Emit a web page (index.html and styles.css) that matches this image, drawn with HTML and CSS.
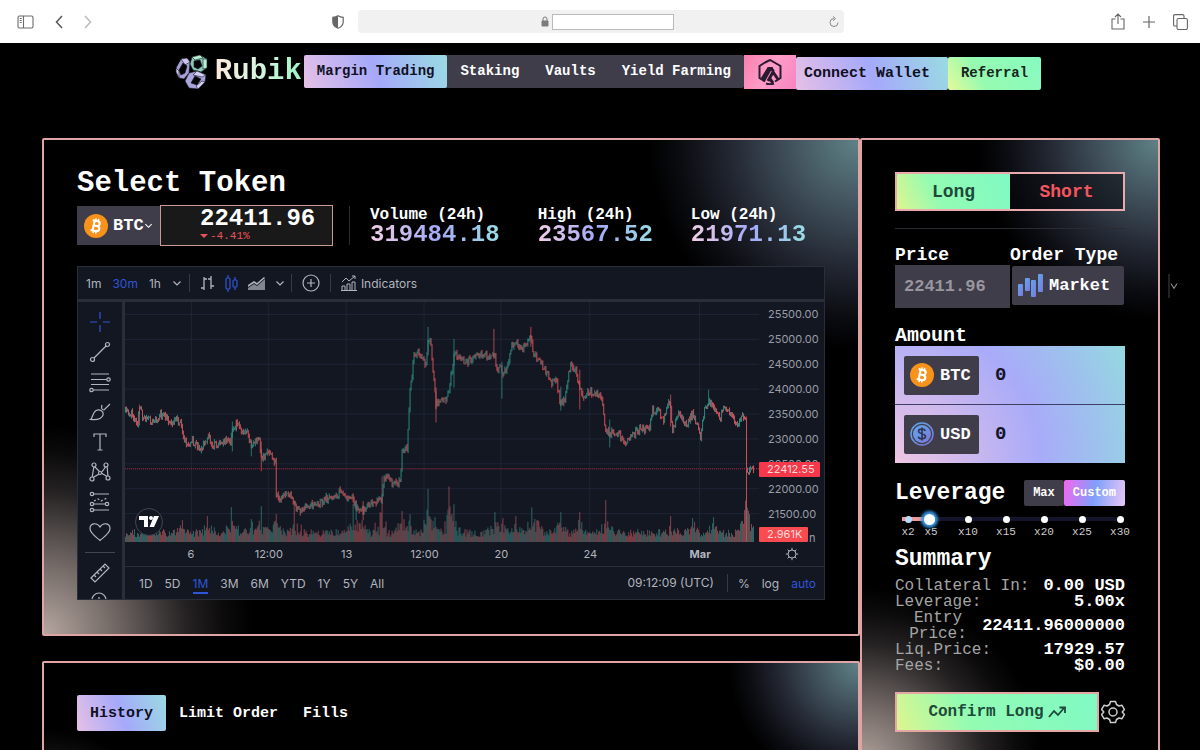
FILE: index.html
```html
<!DOCTYPE html>
<html lang="en">
  <head>
    <meta charset="UTF-8" />
    <meta name="viewport" content="width=device-width, initial-scale=1.0" />
    <title>Rubik - Margin Trading</title>
    <link rel="stylesheet" href="styles.css" />
  </head>
  <body>
    <svg class="defs" width="0" height="0" aria-hidden="true">
      <defs>
        <linearGradient id="blue" x1="0" y1="0" x2="1" y2="1">
          <stop offset="0" stop-color="#5fa8ea" />
          <stop offset="1" stop-color="#7c78dc" />
        </linearGradient>
        <symbol id="btc" viewBox="0 0 24 24">
          <circle cx="12" cy="12" r="12" fill="#f7931a" />
          <g fill="none" stroke="#fff" stroke-width="2.2" transform="rotate(12 12 12)">
            <path d="M9.6 6.5v11M7.6 7h5.2c3.2 0 3.2 4.8 0 4.8H9.6M12.8 11.8c4 0 4 5.2 0 5.2H7.6" />
            <path d="M10.6 4.5V7M13.2 4.5V7M10.6 17v2.5M13.2 17v2.5" stroke-width="1.5" />
          </g>
        </symbol>
        <symbol id="chevron" viewBox="0 0 10 10">
          <path d="M1.5 3.5 5 7l3.5-3.5" fill="none" stroke="currentColor" stroke-width="1.2" />
        </symbol>
      </defs>
    </svg>

    <div class="browser">
      <div class="browser-left">
        <svg width="17" height="14" viewBox="0 0 17 14" fill="none" stroke="#6c6c6c" stroke-width="1.1"><rect x="1" y="1" width="15" height="12" rx="1.5" /><path d="M6.5 1v12M2.7 3.5h2M2.7 5.5h2M2.7 7.5h2" /></svg>
        <svg width="8" height="14" viewBox="0 0 8 14" fill="none" stroke="#555" stroke-width="1.5"><path d="M7 1 1.5 7 7 13" /></svg>
        <svg width="8" height="14" viewBox="0 0 8 14" fill="none" stroke="#bbb" stroke-width="1.5"><path d="m1 1 5.500 6L1 13" /></svg>
      </div>
      <div class="browser-center">
        <svg width="12" height="14" viewBox="0 0 12 14"><path d="M6 .8c1.600 1 3.200 1.500 5.200 1.600V7c0 3-2 5-5.200 6.300C2.800 12 .8 10 .8 7V2.400C2.800 2.300 4.400 1.800 6 .8z" fill="none" stroke="#666" stroke-width="1.2" /><path d="M6 1v12C3 12 1 10 1 7V2.500C3 2.400 4.500 2 6 1z" fill="#666" /></svg>
        <div class="address">
          <svg width="8" height="11" viewBox="0 0 8 11"><rect x="0.500" y="4.500" width="7" height="6" rx="1" fill="#7b7b7b" /><path d="M2 5V3a2 2 0 0 1 4 0v2" fill="none" stroke="#7b7b7b" /></svg>
          <input class="url" type="text" aria-label="Address" />
          <svg class="reload" width="10" height="12" viewBox="0 0 10 12" fill="none" stroke="#888"><path d="M9 6.500A4 4 0 1 1 5 2.500M4 .5l2.500 2L4 4.800" /></svg>
        </div>
      </div>
      <div class="browser-right">
        <svg width="14" height="17" viewBox="0 0 14 17" fill="none" stroke="#666" stroke-width="1.100"><path d="M4.500 6H1v10h12V6H9.500M7 11V1M4 4l3-3 3 3" /></svg>
        <svg width="12" height="12" viewBox="0 0 12 12" stroke="#666" stroke-width="1.200"><path d="M6 0v12M0 6h12" /></svg>
        <svg width="15" height="16" viewBox="0 0 15 16" fill="none" stroke="#666" stroke-width="1.100"><rect x="4" y="4.500" width="10.400" height="11" rx="1.500" /><path d="M4 12H1.500Q.6 12 .6 11V2Q.6.6 2 .6h7.500q1.500 0 1.500 1.400v2.500" /></svg>
      </div>
    </div>

    <header class="header">
      <a class="logo" href="#">
        <svg width="34" height="36" viewBox="0 0 34 36" stroke-linejoin="round" stroke="#15151f" stroke-width="0.600">
          <path d="m1 14 5-9 6-1 3 4-1 11-5 6-5-1-3-6z" fill="#a79fd8" />
          <path d="m1 14 3 3v7l-3-6zM12 4l3 4-5 3-4-6z" fill="#c9c6ee" />
          <path d="m8 9 4 3-2 7-4 2-2-5z" fill="#050508" />
          <path d="m17 3 8-2 7 4v9l-6 4-8-2-3-6z" fill="#8cc9b8" />
          <path d="m17 3 8-2 3 3-8 2zM28 5l4 0v9l-4 1z" fill="#b9f0d4" />
          <path d="m19 7 6-1 2 6-4 3-4-2z" fill="#050508" />
          <path d="m14 19 8-2 9 4-1 7-7 7-9-1-4-7z" fill="#a9a4dc" />
          <path d="m22 17 9 4-4 2-9-2zM23 35l7-7-3-1-6 5z" fill="#d0cdf2" />
          <path d="m20 22 6 3-4 6-6-2z" fill="#050508" />
        </svg>
        <span>Rubik</span>
      </a>
      <nav class="nav">
        <a class="active" href="#">Margin Trading</a>
        <a href="#">Staking</a>
        <a href="#">Vaults</a>
        <a href="#">Yield Farming</a>
      </nav>
      <button class="network" aria-label="Network">
        <svg width="26" height="26" viewBox="0 0 26 26" fill="none" stroke="#2b1a33" stroke-width="2"><path d="M8 3.500 13 1l10.500 6v12L18 22.500M8 22.500 2.500 19V7L8 3.500M9 24.500q4 1.500 8 0" /><path d="M5 20 11.500 9.500h2L6.500 22M11 22l5-9 5.500 8M14.500 9.500l2 3M13 20l3 4" stroke-width="3" /></svg>
      </button>
      <button class="connect">Connect Wallet</button>
      <a class="referral" href="#">Referral</a>
    </header>

    <main class="main">
      <div class="left">
        <section class="panel market">
          <h1>Select Token</h1>
          <div class="token-row">
            <button class="token"><svg width="24" height="24"><use href="#btc" /></svg>BTC<svg class="chev" width="9" height="9"><use href="#chevron" /></svg></button>
            <div class="price-box">
              <strong>22411.96</strong>
              <span><i class="down"></i>-4.41%</span>
            </div>
            <div class="stats">
              <div class="stat"><span>Volume (24h)</span><b>319484.18</b></div>
              <div class="stat"><span>High (24h)</span><b>23567.52</b></div>
              <div class="stat"><span>Low (24h)</span><b>21971.13</b></div>
            </div>
          </div>

          <div class="chart">
            <div class="toolbar">
              <div class="group intervals">
                <button>1m</button>
                <button class="on">30m</button>
                <button>1h</button>
                <button aria-label="More intervals"><svg width="10" height="10"><use href="#chevron" /></svg></button>
              </div>
              <div class="group types">
                <button aria-label="Bars"><svg width="15" height="16" viewBox="0 0 15 16" fill="none" stroke="currentColor" stroke-width="1.300"><path d="M4 2v13M1 13h3M4 4h3M11 1v13M8 4h3M11 11h3" /></svg></button>
                <button class="on" aria-label="Candles"><svg width="13" height="17" viewBox="0 0 13 17" fill="none" stroke="currentColor" stroke-width="1.200"><path d="M3 0v3M3 14v3M10 2v3M10 12v3" /><rect x="1" y="3" width="4" height="11" rx="1" /><rect x="8" y="5" width="4" height="7" rx="1" /></svg></button>
                <button aria-label="Area"><svg width="17" height="14" viewBox="0 0 17 14" fill="currentColor"><path d="m0 9 6-4 3 2 7-6 1 1-8 7-3-2-6 4z" /><path d="M0 14v-2l6-4 3 2 8-7v11z" opacity="0.700" /></svg></button>
                <button aria-label="More chart types"><svg width="10" height="10"><use href="#chevron" /></svg></button>
              </div>
              <div class="group">
                <button aria-label="Compare"><svg width="18" height="18" viewBox="0 0 18 18" fill="none" stroke="currentColor" stroke-width="1.200"><circle cx="9" cy="9" r="8" /><path d="M9 5v8M5 9h8" /></svg></button>
              </div>
              <div class="group">
                <button class="indicators"><svg width="16" height="16" viewBox="0 0 16 16" fill="none" stroke="currentColor"><path d="m1 7 4-4 3 3 6-5M11 1h3v3M1 15.500V11h3v4.500M6 15.500V9h3v6.500M11 15.500V7h3v8.500M0 15.500h16" /></svg>Indicators</button>
              </div>
            </div>

            <div class="chart-body">
              <div class="tools">
                <button class="on" aria-label="Crosshair"><svg viewBox="0 0 22 22"><path d="M11 1v7M11 14v7M1 11h7M14 11h7" /></svg></button>
                <button aria-label="Trend line"><svg viewBox="0 0 22 22"><circle cx="3.500" cy="18.500" r="2" /><circle cx="18.500" cy="3.500" r="2" /><path d="m5 17 12-12" /></svg></button>
                <button aria-label="Fib retracement"><svg viewBox="0 0 22 22"><path d="M2 3h18M2 8.500h16M2 13.500h18M4 19h16" /><circle cx="19.500" cy="8.500" r="1.700" fill="#131722" /><circle cx="2.500" cy="19" r="1.700" fill="#131722" /></svg></button>
                <button aria-label="Brush"><svg viewBox="0 0 22 22"><path d="M1.500 18.500C4 17 3 12 7 9.500c4-2 8 1 7 4.500-1.500 4.500-8 5-12.500 4.500zM13 4c-1 3 0 5 2 5l6-6" /></svg></button>
                <button aria-label="Text"><svg viewBox="0 0 22 22"><path d="M5 6V3h12v3M11 3v16M8.500 19h5" /></svg></button>
                <button aria-label="Pattern"><svg viewBox="0 0 22 22"><path d="m3 17 2-12 7 7 6-8 1 12-7-4z" /><g fill="#131722"><circle cx="3" cy="18" r="2" /><circle cx="5" cy="4" r="2" /><circle cx="17" cy="4" r="2" /><circle cx="19" cy="17" r="2" /><circle cx="11" cy="12" r="1.500" /></g></svg></button>
                <button aria-label="Forecast"><svg viewBox="0 0 22 22"><path d="M3 3h17M3 13h17M3 19h17" /><path d="m5 10 4-2 3 2 6-3" stroke-dasharray="2 2" /><g fill="#131722"><circle cx="3" cy="3" r="1.700" /><circle cx="3" cy="13" r="1.700" /><circle cx="18" cy="13" r="1.700" /><circle cx="3" cy="19" r="1.700" /></g></svg></button>
                <button aria-label="Icons"><svg viewBox="0 0 22 22"><path d="M11 19.500C7 16 1 12 1 7.500 1 2 8 1 11 6c3-5 10-4 10 1.500C21 12 15 16 11 19.500z" /></svg></button>
                <hr />
                <button aria-label="Measure"><svg viewBox="0 0 22 22"><path d="M2 16 16 2l4 4L6 20zM5 13l2 2M8 10l2 2M11 7l2 2M14 4l2 2" /></svg></button>
                <button aria-label="Zoom"><svg viewBox="0 0 22 22"><circle cx="10" cy="8" r="7" /><path d="M7 8h6M10 5v6M15 13l5 5" /></svg></button>
              </div>

              <div class="chart-main">
                <div class="plot-row">
                  <div class="plot">
                    <svg id="plot" viewBox="0 0 635 241" preserveAspectRatio="none" role="img" aria-label="BTC price, 30 minutes"></svg>
                    <div class="tv-badge"><svg width="20" height="12" viewBox="0 0 20 12" fill="#fff"><path d="M0 0h9v11H5V4H0zM15 0h5l-5 11h-4.500z" /><circle cx="12" cy="2" r="2" /></svg></div>
                  </div>
                  <div class="prices">
                    <span>25500.00</span><span>25000.00</span><span>24500.00</span><span>24000.00</span><span>23500.00</span><span>23000.00</span><span>22500.00</span><span>22000.00</span><span>21500.00</span>
                    <div class="tag last">22412.55</div>
                    <div class="tag vol">2.961K</div>
                    <div class="vol-unit">n</div>
                  </div>
                </div>
                <div class="time-row">
                  <div class="times"><span>6</span><span>12:00</span><span>13</span><span>12:00</span><span>20</span><span>24</span><b>Mar</b></div>
                  <button class="axis-settings" aria-label="Axis settings"><svg width="14" height="14" viewBox="0 0 14 14" fill="none" stroke="currentColor"><circle cx="7" cy="7" r="4" /><path d="M7 3V.8M7 11v2.200M3 7H.8M11 7h2.200M4.200 4.200 2.600 2.600M9.800 9.800l1.600 1.600M4.200 9.800l-1.600 1.600M9.800 4.200l1.600-1.600" /></svg></button>
                </div>
                <div class="ranges">
                  <button>1D</button><button>5D</button><button class="on">1M</button><button>3M</button><button>6M</button><button>YTD</button><button>1Y</button><button>5Y</button><button>All</button>
                  <span class="clock">09:12:09 (UTC)</span>
                  <button>%</button><button>log</button><button class="on-text">auto</button>
                </div>
              </div>
            </div>
          </div>
        </section>

        <section class="panel orders">
          <div class="order-tabs">
            <button class="active">History</button>
            <button>Limit Order</button>
            <button>Fills</button>
          </div>
        </section>
      </div>

      <aside class="panel trade">
        <div class="sides">
          <button class="long">Long</button>
          <button class="short">Short</button>
        </div>
        <hr />
        <div class="order-fields">
          <div>
            <label for="price">Price</label>
            <input id="price" type="text" value="22411.96" />
          </div>
          <div>
            <label for="orderType">Order Type</label>
            <div class="select">
              <svg width="25" height="23" viewBox="0 0 25 23" fill="url(#blue)"><rect y="10" width="5" height="12" rx="1" /><rect x="7" y="4" width="5" height="13" rx="1" /><rect x="13" y="6" width="5" height="17" rx="1" /><rect x="20" width="5" height="18" rx="1" /></svg>
              <select id="orderType"><option>Market</option></select>
            </div>
          </div>
          <svg class="order-chev" width="12" height="24" viewBox="0 0 12 24" fill="none" stroke="#aaa"><path d="M1 0v24" stroke="#444" /><path d="m3 9.500 3 5 3-5" /></svg>
        </div>

        <h3>Amount</h3>
        <div class="amounts">
          <div class="amount">
            <label for="btcAmount"><svg width="24" height="24"><use href="#btc" /></svg>BTC</label>
            <input id="btcAmount" type="text" value="0" />
          </div>
          <div class="amount">
            <label for="usdAmount"><svg width="24" height="24" viewBox="0 0 24 24"><circle cx="12" cy="12" r="11" fill="none" stroke="url(#blue)" stroke-width="1.500" /><circle cx="12" cy="12" r="9" fill="url(#blue)" /><path d="M15.500 9c-1-2.500-7-2.500-7 .3 0 3 7 2 7 5.200 0 3-6.500 3-7.300.3M12 5.500v13" fill="none" stroke="#2f3552" stroke-width="1.600" /></svg>USD</label>
            <input id="usdAmount" type="text" value="0" />
          </div>
        </div>

        <div class="leverage-head">
          <h2>Leverage</h2>
          <div class="modes"><button>Max</button><button class="custom">Custom</button></div>
        </div>
        <div class="leverage">
          <input type="range" min="2" max="30" value="5" aria-label="Leverage" />
          <div class="marks">
            <span>x2</span><span>x5</span><span>x10</span><span>x15</span><span>x20</span><span>x25</span><span>x30</span>
          </div>
        </div>

        <h2 class="summary-title">Summary</h2>
        <dl class="summary">
          <div><dt>Collateral In:</dt><dd>0.00 USD</dd></div>
          <div><dt>Leverage:</dt><dd>5.00x</dd></div>
          <div><dt class="wrap">Entry Price:</dt><dd>22411.96000000</dd></div>
          <div><dt>Liq.Price:</dt><dd>17929.57</dd></div>
          <div><dt>Fees:</dt><dd>$0.00</dd></div>
        </dl>

        <div class="confirm-row">
          <button class="confirm">Confirm Long<svg width="18" height="12" viewBox="0 0 18 12" fill="none" stroke="currentColor" stroke-width="1.800"><path d="m1 11 5-6 4 4 6-7M11.500 1.500H17V7" /></svg></button>
          <button class="settings" aria-label="Settings"><svg width="24" height="24" viewBox="0 0 24 24" fill="none" stroke="#ccc" stroke-width="1.500" stroke-linejoin="round"><circle cx="12" cy="12" r="4" /><path d="M9.500 1.500h5l1 3 2.500 1.500 3-.7 2.400 4.200-2.200 2.500 2.200 2.500-2.400 4.200-3-.7-2.500 1.500-1 3h-5l-1-3L6 18l-3 .7L.6 14.500 2.800 12 .6 9.500 3 5.300 6 6l2.500-1.500z" /></svg></button>
        </div>
      </aside>
    </main>
    <script src="script.js"></script>
  </body>
</html>
```
FILE: styles.css
```css
* {
  box-sizing: border-box;
}

body {
  margin: 0;
  background: #000;
  color: #fff;
  font-family: "Liberation Mono", monospace;
  font-weight: bold;
  overflow-x: hidden;
}

button,
input,
select {
  font: inherit;
  color: inherit;
  margin: 0;
  padding: 0;
  border: none;
  background: none;
}

button {
  cursor: pointer;
  white-space: nowrap;
}

a {
  color: inherit;
  text-decoration: none;
}

svg {
  flex: none;
  display: block;
}

h1,
h2,
h3,
dl,
dd {
  margin: 0;
}

.defs {
  position: absolute;
}

/* Browser bar */
.browser {
  display: grid;
  grid-template-columns: 315fr 512px 344fr;
  align-items: center;
  height: 43px;
  padding: 0 12px 0 17px;
  background: #fff;
}

.browser-left,
.browser-right,
.browser-center,
.address {
  display: flex;
  align-items: center;
}

.browser-left {
  gap: 21px;
}

.browser-right {
  gap: 18px;
  justify-content: flex-end;
}

.browser-center {
  gap: 14px;
}

.address {
  flex: 1;
  gap: 3px;
  height: 23px;
  padding: 0 5px 0 183px;
  border-radius: 4px;
  background: #f1f1f1;
}

.url {
  width: 122px;
  height: 16px;
  border: 1px solid #bbb;
  background: #fff;
  color: #333;
}

.reload {
  margin-left: auto;
}

/* Site header */
.header {
  display: flex;
  justify-content: center;
  align-items: flex-start;
  height: 95px;
  padding: 12px 0 0 16px;
  font-size: 14px;
}

.logo {
  display: flex;
  align-items: center;
  gap: 6px;
  height: 33px;
  margin-right: 2px;
}

.logo span {
  font-size: 29px;
  background: linear-gradient(100deg, #ffe8dd, #d8f5e0 50%, #98f5c4);
  background-clip: text;
  color: transparent;
}

.nav {
  display: flex;
  background: #403d4b;
  border-radius: 2px;
}

.nav a,
.referral {
  padding: 0 13px;
  line-height: 33px;
}

.nav .active,
.connect,
.order-tabs .active {
  background: linear-gradient(70deg, #e6c0e6, #a5a9fa 50%, #9adbe3);
  color: #10101f;
  border-radius: 2px;
}

.network {
  display: grid;
  place-items: center;
  width: 52px;
  height: 34px;
  background: linear-gradient(120deg, #f87fae, #ff9dc8 50%, #f783c0);
}

.connect {
  height: 33px;
  margin-top: 2px;
  padding: 0 18px 0 8px;
  font-size: 15px;
}

.referral {
  margin-top: 2px;
  background: linear-gradient(60deg, #e6fa9a, #96fbb0 35%, #88fac0);
  color: #17251f;
  border-radius: 2px;
}

/* Panels */
.main {
  display: grid;
  grid-template-columns: minmax(0, 1fr) 300px;
  align-items: start;
  padding: 0 40px 0 42px;
}

.left {
  display: flex;
  flex-direction: column;
  gap: 25px;
}

.panel {
  --glow: 210px;
  border: 2px solid #dfa5a5;
  border-radius: 2px;
  padding: 32px 33px 34px;
  background:
    radial-gradient(circle var(--glow) at 100% 0, #5f8286 0, #435560 30%, #222631 62%, #0b0c11 85%, transparent),
    radial-gradient(circle var(--glow) at 0 100%, #b5a69f 0, #6f6663 35%, #252223 68%, #0c0b0b 86%, transparent),
    #000;
}

h1 {
  font-size: 29px;
  line-height: 24px;
}

h2 {
  font-size: 23px;
  line-height: 26px;
}

h3 {
  font-size: 20px;
  line-height: 20px;
}

.token-row {
  display: flex;
  align-items: center;
  margin: 9px 0 20px;
}

.token {
  display: flex;
  align-items: center;
  gap: 5px;
  width: 83px;
  height: 39px;
  padding-left: 7px;
  background: #403d4b;
  font-size: 17px;
}

.token .chev {
  margin-left: -5px;
}

.price-box {
  display: flex;
  flex-direction: column;
  width: 173px;
  height: 41px;
  padding: 1px 0 0 39px;
  border: 1px solid #c99a95;
  background: #191919;
}

.price-box strong {
  font-size: 24px;
  line-height: 24px;
}

.price-box span {
  display: flex;
  align-items: center;
  gap: 2px;
  font-size: 11px;
  line-height: 10px;
  font-weight: normal;
  color: #e8525c;
}

.down {
  border: 4px solid transparent;
  border-top-color: #e8525c;
  border-bottom: none;
}

.stats {
  display: flex;
  gap: 38px;
  margin-left: 16px;
  padding-left: 20px;
  border-left: 1px solid #2c2c2c;
}

.stat {
  display: flex;
  flex-direction: column;
}

.stat span {
  font-size: 16px;
  line-height: 18px;
}

.stat b {
  font-size: 24px;
  line-height: 21px;
  background: linear-gradient(90deg, #f0cfe4, #a5a9f8 50%, #98dce4);
  background-clip: text;
  color: transparent;
}

/* Chart widget */
.chart {
  font-family: Inter, sans-serif;
  font-weight: normal;
  font-size: 12px;
  color: #b2b5be;
  background: #131722;
  border: 1px solid #2a2e39;
}

.chart button {
  display: flex;
  align-items: center;
}

.chart .on,
.chart .on-text {
  color: #2f55d8;
}

.toolbar {
  display: flex;
  align-items: center;
  height: 35px;
  border-bottom: 3px solid #2a2e39;
}

.group {
  display: flex;
  align-items: center;
  height: 18px;
  padding: 0 10px;
  border-right: 1px solid #363a45;
}

.group:last-child {
  border: none;
}

.intervals {
  gap: 11px;
  padding: 0 7px 0 8px;
}

.types {
  gap: 10px;
  padding: 0 6px 0 10px;
}

.indicators {
  gap: 4px;
}

.chart-body {
  display: flex;
  height: 297px;
}

.tools {
  display: flex;
  flex-direction: column;
  align-items: center;
  gap: 8px;
  width: 47px;
  padding-top: 9px;
  border-right: 3px solid #2a2e39;
  overflow: hidden;
}

.tools svg {
  width: 22px;
  height: 22px;
  fill: none;
  stroke: currentColor;
  stroke-width: 1.2px;
}

.tools hr {
  flex: none;
  width: 30px;
  margin: 1px 0;
  border: none;
  border-top: 1px solid #434651;
}

.chart-main {
  display: flex;
  flex-direction: column;
  flex: 1;
  min-width: 0;
}

.plot-row {
  display: flex;
  flex: 1;
  min-height: 0;
}

.plot {
  position: relative;
  flex: 1;
  min-width: 0;
}

.plot > svg {
  width: 100%;
  height: 100%;
}

.tv-badge {
  position: absolute;
  left: 10px;
  bottom: 6px;
  display: grid;
  place-items: center;
  width: 28px;
  height: 28px;
  border: 1px solid #434651;
  border-radius: 50%;
  background: #131722;
}

.prices {
  position: relative;
  display: flex;
  flex-direction: column;
  width: 65px;
  padding: 0 0 16px 9px;
  font-size: 11px;
  color: #9a9da6;
}

.prices span {
  display: flex;
  align-items: center;
  flex: 1;
}

.tag {
  position: absolute;
  left: 0;
  padding-left: 8px;
  height: 15px;
  line-height: 15px;
  border-radius: 1px;
  background: #f5394a;
  color: #ffd9dc;
}

.tag.last {
  top: 160px;
  width: 61px;
}

.tag.vol {
  bottom: 0;
  width: 49px;
  background: #fa4c50;
}

.vol-unit {
  position: absolute;
  left: 50px;
  bottom: -3px;
}

.time-row {
  display: flex;
  align-items: center;
  height: 24px;
  font-size: 11px;
}

.times {
  display: grid;
  grid-template-columns: 78fr 78fr 78fr 78fr 76fr 102fr 118fr;
  flex: 1;
  padding-left: 27px;
  text-align: center;
}

.axis-settings {
  justify-content: center;
  width: 65px;
}

.ranges {
  display: flex;
  align-items: center;
  gap: 12px;
  height: 33px;
  padding: 0 8px 0 14px;
  border-top: 1px solid #2a2e39;
}

.ranges .on {
  height: 22px;
  border-bottom: 2px solid #2f55d8;
  padding-top: 2px;
}

.clock {
  margin-left: auto;
  margin-right: -2px;
  padding-right: 13px;
  line-height: 18px;
  border-right: 1px solid #363a45;
}

/* Orders */
.orders {
  --glow: 130px;
  min-height: 200px;
}

.order-tabs {
  display: flex;
  gap: 25px;
  font-size: 15px;
}

.order-tabs button {
  height: 36px;
}

.order-tabs .active {
  padding: 0 13px;
  margin-right: -12px;
}

/* Trade panel */
.trade {
  --glow: 180px;
  display: flex;
  flex-direction: column;
}

.sides {
  display: grid;
  grid-template-columns: 1fr 1fr;
  height: 39px;
  border: 2px solid #eaa9ac;
  font-size: 18px;
}

.long,
.confirm {
  background: linear-gradient(65deg, #dff58f, #93fcb2 35%, #80f9c4);
  color: #1d4a3a;
}

.short {
  background: #05050a88;
  color: #f5555f;
}

.trade hr {
  width: 100%;
  margin: 17px 0;
  border: none;
  border-top: 1px solid #292b30;
}

.order-fields {
  position: relative;
  display: grid;
  grid-template-columns: 1fr 1fr;
  font-size: 18px;
}

.order-fields label {
  display: block;
  line-height: 19px;
  white-space: nowrap;
}

.order-fields input {
  width: 100%;
  height: 43px;
  padding-left: 9px;
  background: #403d4b;
  color: #99969f;
  font-size: 17px;
}

.select {
  display: flex;
  align-items: center;
  gap: 6px;
  height: 39px;
  margin: 1px 1px 0 2px;
  padding-left: 6px;
  background: #403d4b;
  border-radius: 2px;
  font-size: 17px;
}

.select select {
  flex: 1;
  min-width: 0;
  appearance: none;
}

.order-chev {
  position: absolute;
  left: calc(100% + 43px);
  top: 28px;
}

.trade h3 {
  margin-top: 18px;
}

.amounts {
  background: radial-gradient(circle at 0 100%, #f0c6e2 0, #a9abf9 145px, #9ec0ee 200px, #93dede 270px);
}

.amount {
  display: flex;
  align-items: center;
  gap: 16px;
  height: 58px;
  padding: 0 9px;
  color: #15152a;
}

.amount:first-child {
  height: 59px;
  border-bottom: 1px solid #3e3e66;
}

.amount label {
  display: flex;
  align-items: center;
  gap: 6px;
  width: 75px;
  height: 39px;
  padding-left: 6px;
  border-radius: 2px;
  background: #403d4b;
  color: #fff;
  font-size: 17px;
}

.amount input {
  flex: 1;
  min-width: 0;
  font-size: 19px;
}

.leverage-head {
  display: flex;
  align-items: center;
  justify-content: space-between;
  margin-top: 17px;
}

.modes {
  display: flex;
  height: 26px;
  font-size: 12px;
}

.modes button {
  padding: 0 9px;
  border-radius: 2px;
  background: #403d4b;
}

.modes .custom {
  background: linear-gradient(100deg, #f467f0, #7fa0fa 50%, #e8c8f6);
}

.leverage {
  position: relative;
  margin: 7px -20px 0 2px;
}

.leverage input {
  position: absolute;
  left: 5px;
  top: 0;
  width: 220px;
  height: 12px;
  appearance: none;
  background: linear-gradient(90deg, #ee9a9f 24px, #14142a 24px) center / 100% 4px no-repeat;
}

.leverage input::-webkit-slider-thumb {
  appearance: none;
  width: 11px;
  height: 11px;
  border-radius: 50%;
  background: #fff;
  box-shadow: 0 0 3px 3px #3696e4;
}

.marks {
  display: grid;
  grid-template-columns: 22fr 24fr 50fr 26fr 50fr 26fr 50fr;
  position: relative;
  pointer-events: none;
  font-size: 11px;
  font-weight: normal;
  line-height: 12px;
  color: #ccc;
}

.marks span {
  display: flex;
  flex-direction: column;
  align-items: center;
  gap: 3px;
}

.marks span::before {
  content: "";
  width: 7px;
  height: 7px;
  margin-top: 3px;
  border-radius: 50%;
  background: #fff;
}

.marks span:first-child::before {
  background: #b5dcff;
}

.summary-title {
  margin: 8px 0 6px;
}

.summary {
  font-size: 16px;
  line-height: 16px;
}

.summary div {
  display: flex;
  align-items: center;
  justify-content: space-between;
}

.summary dt {
  color: #a5a5a5;
  font-weight: normal;
}

.summary dd {
  font-size: 17px;
}

.summary .wrap {
  width: 86px;
  text-align: center;
}

.confirm-row {
  display: flex;
  align-items: center;
  gap: 2px;
  margin-top: 18px;
}

.confirm {
  display: flex;
  align-items: center;
  justify-content: center;
  gap: 4px;
  flex: 1;
  height: 40px;
  border: 2px solid #e5a7a4;
  font-size: 16px;
}
```
FILE: script.js
```js
const NS = "http://www.w3.org/2000/svg";
const plot = document.getElementById("plot");
const GREEN = "#2f8a80";
const RED = "#cf5059";

// Price path, x then y
const points = [
  0,110, 6,113, 12,120, 14,106, 18,116, 23,118, 28,121, 33,116, 36,113, 41,117, 45,121, 51,119, 55,121,
  59,136, 62,145, 66,138, 70,144, 75,146, 80,142, 83,134, 88,144, 95,141, 100,139, 105,141, 107,128,
  111,122, 116,128, 122,132, 126,144, 130,140, 134,141, 136,158, 141,153, 146,152, 150,162, 151,191,
  153,199, 158,196, 165,195, 170,205, 175,210, 181,205, 188,203, 193,204, 200,197, 208,198, 215,189,
  220,196, 227,195, 231,208, 235,206, 238,210, 245,201, 252,200, 256,197, 259,179, 263,176, 268,183,
  273,183, 275,178, 277,153, 282,148, 285,88, 287,73, 289,50, 295,54, 301,63, 303,38, 306,43, 309,78,
  311,103, 317,98, 321,101, 325,83, 329,53, 335,56, 342,60, 350,54, 358,53, 365,54, 369,51, 372,68,
  375,65, 378,73, 384,60, 387,43, 392,43, 397,48, 403,38, 406,34, 408,50, 415,60, 423,73, 427,82,
  432,80, 436,105, 441,93, 446,60, 451,70, 455,86, 459,95, 465,90, 471,92, 477,96, 481,130, 485,132,
  491,130, 501,140, 507,134, 515,128, 525,127, 528,108, 535,111, 539,118, 545,98, 548,128, 554,113,
  562,123, 568,111, 576,134, 580,106, 585,101, 591,108, 596,116, 599,106, 605,113, 612,122, 618,114,
  621,116, 622,168, 624,171, 629,167,
];

// Long wicks: x, top, bottom
const wicks = [
  [14, 103, 124], [107, 120, 150], [111, 118, 130], [126, 138, 155], [136, 140, 170], [231, 200, 219],
  [238, 200, 219], [303, 25, 50], [311, 90, 121], [329, 37, 86], [369, 27, 55], [377, 60, 97],
  [406, 25, 45], [436, 85, 109], [455, 68, 108], [485, 118, 146], [546, 93, 125], [584, 88, 104],
  [622, 115, 241],
];

const volumeSpikes = {
  57: 22, 82: 26, 106: 35, 126: 23, 136: 36, 151: 28, 169: 42, 228: 38, 237: 22, 257: 66, 277: 31,
  285: 28, 303: 53, 310: 25, 324: 53, 329: 38, 370: 30, 378: 24, 391: 26, 407: 34, 413: 22, 436: 30,
  455: 30, 481: 42, 546: 26, 568: 24, 589: 25, 622: 70,
};

let seed = 11;
function random() {
  seed = (seed * 16807) % 2147483647;
  return seed / 2147483647;
}

function addPath(d, color, width, extra = {}) {
  const path = document.createElementNS(NS, "path");
  path.setAttribute("d", d);
  path.setAttribute("stroke", color);
  path.setAttribute("stroke-width", width);
  path.setAttribute("fill", "none");
  Object.entries(extra).forEach(([key, value]) => path.setAttribute(key, value));
  plot.appendChild(path);
}

function priceAt(x) {
  let i = 0;
  while (i < points.length - 4 && points[i + 2] < x) i += 2;
  const t = (x - points[i]) / (points[i + 2] - points[i]);
  return points[i + 1] + (points[i + 3] - points[i + 1]) * t;
}

// Grid
let grid = "";
for (let i = 0; i < 9; i++) grid += `M0 ${12.5 + i * 25}H635`;
[66, 143, 221, 299, 376, 465, 575].forEach((x) => (grid += `M${x + 0.5} 0V241`));
addPath(grid, "#1e2536", 1);

// Volume and candles
const paths = { up: "", down: "", volUp: "", volDown: "" };
let previous = priceAt(0);
for (let x = 0; x <= 629; x++) {
  const close = priceAt(x) + (random() - 0.5) * 7;
  const up = close < previous;
  const top = Math.min(close, previous) - random() * 3;
  const bottom = Math.max(close, previous) + random() * 3;
  paths[up ? "up" : "down"] += `M${x + 0.5} ${top}V${bottom}`;

  let volume = 5 + random() * 8;
  Object.entries(volumeSpikes).forEach(([sx, height]) => {
    const distance = Math.abs(x - sx);
    if (distance === 0) volume = height;
    else if (distance < 8) volume += (random() * height * 1.4) / (distance + 2);
  });
  paths[random() > 0.5 ? "volUp" : "volDown"] += `M${x + 0.5} 241v${-volume}`;
  previous = close;
}
addPath(paths.volUp, "#3c8580", 1, { opacity: 0.7 });
addPath(paths.volDown, "#b5565c", 1, { opacity: 0.7 });
addPath(paths.up, GREEN, 1);
addPath(paths.down, RED, 1);
wicks.forEach(([x, top, bottom], i) => {
  addPath(`M${x + 0.5} ${top}V${bottom}`, i % 2 && x < 600 ? GREEN : RED, 1, { opacity: 0.8 });
});

// Last price
addPath("M0 167.5H635", "#b03048", 1, { "stroke-dasharray": "1 1" });
```
